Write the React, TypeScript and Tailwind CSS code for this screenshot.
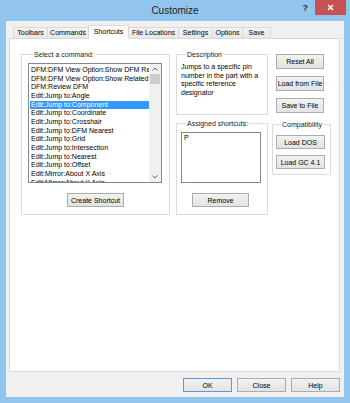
import React from 'react';

const font = "font-['Liberation_Sans',Arial,sans-serif]";

const commands = [
  'DFM:DFM View Option:Show DFM Results',
  'DFM:DFM View Option:Show Related',
  'DFM:Review DFM',
  'Edit:Jump to:Angle',
  'Edit:Jump to:Component',
  'Edit:Jump to:Coordinate',
  'Edit:Jump to:Crosshair',
  'Edit:Jump to:DFM Nearest',
  'Edit:Jump to:Grid',
  'Edit:Jump to:Intersection',
  'Edit:Jump to:Nearest',
  'Edit:Jump to:Offset',
  'Edit:Mirror:About X Axis',
  'Edit:Mirror:About Y Axis',
];

const tabs = [
  { label: 'Toolbars', w: 'w-[35px]' },
  { label: 'Commands', w: 'w-[42px]' },
  { label: 'Shortcuts', w: 'w-[41px]', active: true },
  { label: 'File Locations', w: 'w-[51px]' },
  { label: 'Settings', w: 'w-[35px]' },
  { label: 'Options', w: 'w-[31px]' },
  { label: 'Save', w: 'w-[29px]' },
];

interface BtnProps {
  label: string;
  className?: string;
  isDefault?: boolean;
}

const Btn: React.FC<BtnProps> = ({ label, className = '', isDefault }) => (
  <button
    className={`flex items-center justify-center border bg-gradient-to-b from-[#f2f2f2] to-[#e3e3e3] text-[7px] leading-none text-black ${
      isDefault ? 'border-[#5b9bd5]' : 'border-[#acacac]'
    } ${className}`}
  >
    {label}
  </button>
);

interface GroupProps {
  title: string;
  className?: string;
  children: React.ReactNode;
}

const Group: React.FC<GroupProps> = ({ title, className = '', children }) => (
  <fieldset className={`min-w-0 border border-[#dcdcdc] ${className}`}>
    <legend className="ml-[5px] px-[1px] text-[7px] leading-[9px] text-[#1a1a1a]">{title}</legend>
    {children}
  </fieldset>
);

const Chevron = ({ up }: { up?: boolean }) => (
  <svg width="6" height="4" viewBox="0 0 6 4" className="block">
    <path
      d={up ? 'M0.5 3.5 L3 1 L5.5 3.5' : 'M0.5 0.5 L3 3 L5.5 0.5'}
      fill="none"
      stroke="#606060"
      strokeWidth="1"
    />
  </svg>
);

export default function App() {
  return (
    <div className={`${font} w-[350px] h-[403px] bg-[#92c5ee] flex flex-col overflow-hidden`}>
      {/* Title bar */}
      <div className="h-[21px] flex items-start">
        <div className="flex-1" />
        <div className="pt-[5px] text-[10px] leading-[12px] text-[#222]">Customize</div>
        <div className="flex-1 flex justify-end items-start">
          <span className="mt-[3px] mr-[7px] text-[9px] font-bold leading-[10px] text-[#333]">?</span>
          <div className="mr-[4px] w-[31px] h-[15px] bg-[#c75050] flex items-center justify-center">
            <svg width="7" height="7" viewBox="0 0 7 7">
              <path d="M1 1 L6 6 M6 1 L1 6" stroke="#fff" strokeWidth="1.5" />
            </svg>
          </div>
        </div>
      </div>

      {/* Client area */}
      <div className="flex-1 mx-[6px] mb-[6px] bg-[#f0f0f0] flex flex-col pt-[4px] pl-[3px] pr-[4px] pb-[5px]">
        {/* Tabs */}
        <div className="h-[13px] flex items-end pl-[4px]">
          {tabs.map((t, i) =>
            t.active ? (
              <div
                key={t.label}
                className={`${t.w} relative z-10 -ml-px h-[14px] -mb-px bg-white border border-b-0 border-[#d9d9d9] flex items-center justify-center text-[7px] text-black`}
              >
                {t.label}
              </div>
            ) : (
              <div
                key={t.label}
                className={`${t.w} ${i > 0 ? '-ml-px' : ''} h-[11px] bg-gradient-to-b from-[#f3f3f3] to-[#e8e8e8] border border-b-0 border-[#d9d9d9] flex items-center justify-center text-[7px] text-black`}
              >
                {t.label}
              </div>
            )
          )}
        </div>

        {/* Tab panel */}
        <div className="flex-1 bg-white border border-[#d9d9d9] flex items-start pl-[11px] pt-[11px]">
          {/* Select a command */}
          <Group title="Select a command:" className="w-[149px] pl-[6px] pr-[7px] pt-[4px] pb-[7px] flex flex-col">
            <div className="h-[120px] border border-[#828790] flex">
              <div className="flex-1 min-w-0 overflow-hidden pt-[2px] pl-[1px]">
                {commands.map((c, i) => (
                  <div
                    key={c}
                    className={`h-[8.67px] leading-[8.67px] text-[7px] whitespace-nowrap pl-[1px] ${
                      i === 4 ? 'bg-[#3399ff] text-white' : 'text-black'
                    }`}
                  >
                    {c}
                  </div>
                ))}
              </div>
              <div className="w-[12px] bg-[#f0f0f0] flex flex-col items-center">
                <div className="h-[10px] flex items-center justify-center">
                  <Chevron up />
                </div>
                <div className="w-[10px] h-[10px] bg-[#cdcdcd]" />
                <div className="flex-1" />
                <div className="h-[10px] flex items-center justify-center">
                  <Chevron />
                </div>
              </div>
            </div>
            <div className="mt-[10px] flex justify-center pl-[1px]">
              <Btn label="Create Shortcut" className="w-[57px] h-[14px]" />
            </div>
          </Group>

          {/* Middle column */}
          <div className="ml-[6px] w-[92px] flex flex-col">
            <Group title="Description" className="h-[65px] pl-[4px] pr-[3px] pt-[4px]">
              <p className="text-[7px] leading-[8.67px] text-black">
                Jumps to a specific pin number in the part with a specific reference designator
              </p>
            </Group>
            <Group title="Assigned shortcuts:" className="mt-[4px] pl-[4px] pr-[6px] pt-[4px] pb-[7px] flex flex-col">
              <div className="h-[51px] border border-[#828790] pl-[2px] pt-[1px] text-[7px] leading-[8.67px] text-black">
                P
              </div>
              <div className="mt-[10px] flex pl-[11px]">
                <Btn label="Remove" className="w-[57px] h-[14px]" />
              </div>
            </Group>
          </div>

          {/* Right column */}
          <div className="ml-[4px] w-[59px] flex flex-col">
            <div className="mt-[4px] ml-[4px] flex flex-col gap-[7px]">
              <Btn label="Reset All" className="w-[48px] h-[15px]" />
              <Btn label="Load from File" className="w-[48px] h-[15px]" />
              <Btn label="Save to File" className="w-[48px] h-[15px]" />
            </div>
            <Group title="Compatibility" className="mt-[7px] pl-[3px] pt-[6px] pb-[5px] flex flex-col gap-[6px]">
              <Btn label="Load DOS" className="w-[49px] h-[14px]" />
              <Btn label="Load GC 4.1" className="w-[49px] h-[14px]" />
            </Group>
          </div>
        </div>

        {/* Footer buttons */}
        <div className="mt-[6px] flex justify-end gap-[5px]">
          <Btn label="OK" isDefault className="w-[49px] h-[14px]" />
          <Btn label="Close" className="w-[49px] h-[14px]" />
          <Btn label="Help" className="w-[49px] h-[14px]" />
        </div>
      </div>
    </div>
  );
}
